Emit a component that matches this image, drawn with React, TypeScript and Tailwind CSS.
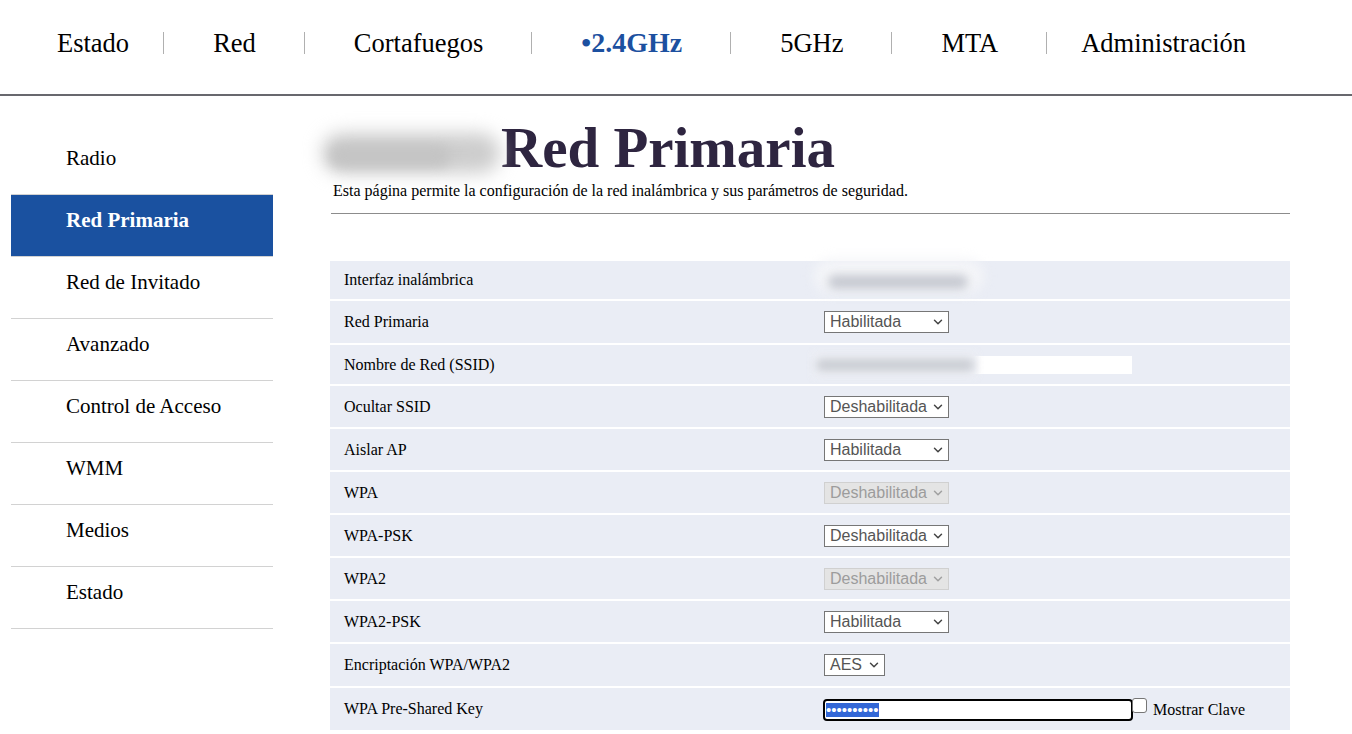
import { ChevronDown } from "lucide-react";

const navItems = ["Estado", "Red", "Cortafuegos", "2.4GHz", "5GHz", "MTA", "Administración"];
const sideItems = ["Radio", "Red Primaria", "Red de Invitado", "Avanzado", "Control de Acceso", "WMM", "Medios", "Estado"];

type Row = {
  label: string;
  h: string;
  kind: "blur" | "select" | "ssid" | "psk";
  value?: string;
  width?: string;
  disabled?: boolean;
};

const rows: Row[] = [
  { label: "Interfaz inalámbrica", h: "h-[40px]", kind: "blur" },
  { label: "Red Primaria", h: "h-[44px]", kind: "select", value: "Habilitada" },
  { label: "Nombre de Red (SSID)", h: "h-[41px]", kind: "ssid" },
  { label: "Ocultar SSID", h: "h-[43px]", kind: "select", value: "Deshabilitada" },
  { label: "Aislar AP", h: "h-[43px]", kind: "select", value: "Habilitada" },
  { label: "WPA", h: "h-[43px]", kind: "select", value: "Deshabilitada", disabled: true },
  { label: "WPA-PSK", h: "h-[43px]", kind: "select", value: "Deshabilitada" },
  { label: "WPA2", h: "h-[43px]", kind: "select", value: "Deshabilitada", disabled: true },
  { label: "WPA2-PSK", h: "h-[43px]", kind: "select", value: "Habilitada" },
  { label: "Encriptación WPA/WPA2", h: "h-[44px]", kind: "select", value: "AES", width: "w-[61px]" },
  { label: "WPA Pre-Shared Key", h: "h-[44px]", kind: "psk" },
];

export default function App() {
  return (
    <div className="min-h-[734px] bg-white font-['Liberation_Serif',serif] text-black">
      <nav className="flex h-[96px] items-start border-b-2 border-[#68686e] pl-[57px] pt-[27px]">
        {navItems.map((item, i) => (
          <div key={item} className="flex h-[32px] items-center">
            {i > 0 && (
              <span
                className={`h-[22px] border-l border-[#b0b0b0] ${i === 1 ? "ml-[34px]" : "ml-[48px]"} ${
                  i === navItems.length - 1 ? "mr-[34px]" : "mr-[49px]"
                }`}
              />
            )}
            {item === "2.4GHz" ? (
              <span className="text-[28px] leading-[32px] font-bold text-[#1c50a0]">•2.4GHz</span>
            ) : (
              <span className="text-[26.5px] leading-[32px]">{item}</span>
            )}
          </div>
        ))}
      </nav>

      <div className="flex">
        <aside className="ml-[11px] mt-[37px] w-[262px] shrink-0">
          {sideItems.map((item) => {
            const active = item === "Red Primaria";
            return (
              <div
                key={item}
                className={`h-[62px] border-b border-[#d2d2d2] pl-[55px] pt-[12px] text-[21px] leading-[26px] ${
                  active ? "bg-[#1a51a0] font-bold text-white" : ""
                }`}
              >
                {item}
              </div>
            );
          })}
        </aside>

        <main className="ml-[57px] w-[960px]">
          <div className="mt-[23px] flex items-start">
            <div className="relative h-[60px] w-[171px]">
              <div className="absolute left-[-8px] top-[14px] h-[40px] w-[178px] rounded-full bg-[#cdcdcd] blur-[9px]" />
              <div className="absolute left-[0px] top-[26px] h-[22px] w-[120px] rounded-full bg-[#c4c4c4] blur-[6px]" />
            </div>
            <h1 className="text-[57px] leading-[57px] font-bold text-[#2e2540]">Red Primaria</h1>
          </div>
          <p className="ml-[3px] mt-[3px] text-[16px] leading-[18px]">
            Esta página permite la configuración de la red inalámbrica y sus parámetros de seguridad.
          </p>
          <div className="ml-[1px] mt-[13px] border-t border-[#8c8c8c]" />

          <div className="mt-[47px]">
            {rows.map((row) => (
              <div
                key={row.label}
                className={`grid grid-cols-[494px_1fr] items-center border-b-2 border-white bg-[#eaedf5] ${row.h}`}
              >
                <div className="pl-[14px] text-[16px]">{row.label}</div>
                <div className="flex items-center">
                  <Value row={row} />
                </div>
              </div>
            ))}
          </div>
        </main>
      </div>
    </div>
  );
}

function Value({ row }: { row: Row }) {
  if (row.kind === "blur") {
    return (
      <div className="relative h-[30px] w-[160px]">
        <div className="absolute left-[-10px] top-[-6px] h-[34px] w-[170px] rounded-full bg-[#f4f5f8] blur-[6px]" />
        <div className="absolute left-[4px] top-[10px] h-[14px] w-[140px] rounded-full bg-[#c6c9d1] blur-[5px]" />
      </div>
    );
  }
  if (row.kind === "ssid") {
    return (
      <div className="relative h-[18px] w-[308px] bg-white">
        <div className="absolute left-[-12px] top-[-4px] h-[26px] w-[166px] bg-[#edeff5] blur-[3px]" />
        <div className="absolute left-[-8px] top-[3px] h-[12px] w-[158px] rounded-full bg-[#cacdd3] blur-[4px]" />
      </div>
    );
  }
  if (row.kind === "psk") {
    return (
      <div className="flex items-start">
        <div className="-ml-[1px] mt-[1px] flex h-[22px] w-[310px] items-center rounded-[4px] border-2 border-black bg-white pl-[1px]">
          <span className="bg-[#3367d6] font-['Liberation_Sans',sans-serif] text-[15px] leading-[14px] text-white">
            ••••••••••
          </span>
        </div>
        <span className="-ml-[1px] h-[15px] w-[15px] rounded-[3px] border border-[#767676] bg-white" />
        <span className="ml-[6px] mt-[3px] text-[16px] leading-[18px]">Mostrar Clave</span>
      </div>
    );
  }
  const disabled = row.disabled;
  return (
    <div
      className={`flex h-[22px] items-center justify-between border pl-[5px] pr-[3px] font-['Liberation_Sans',sans-serif] text-[16px] ${
        row.width ?? "w-[125px]"
      } ${disabled ? "border-[#d0d0d0] bg-[#e4e4e4] text-[#9c9c9c]" : "border-[#767676] bg-white text-[#555]"}`}
    >
      <span className="leading-[20px]">{row.value}</span>
      <ChevronDown size={14} strokeWidth={2.5} className={disabled ? "text-[#a0a0a0]" : "text-[#444]"} />
    </div>
  );
}
